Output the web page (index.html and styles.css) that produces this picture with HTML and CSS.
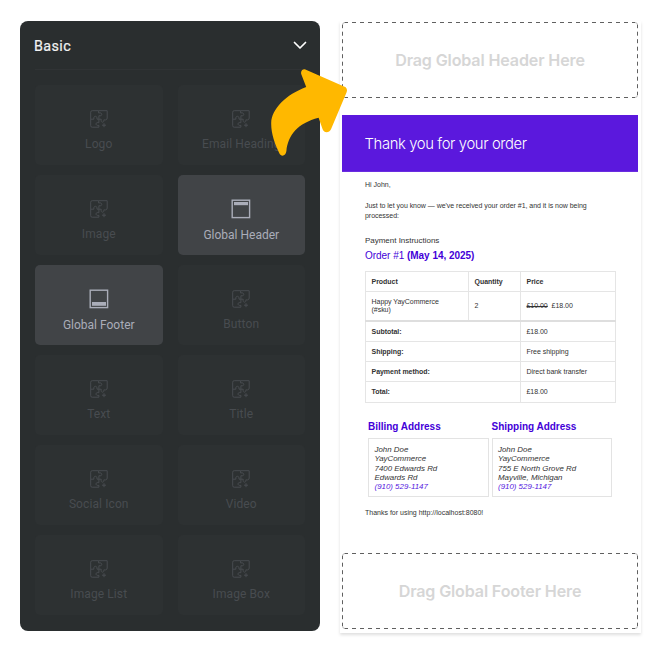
FILE: index.html
```html
<!DOCTYPE html>
<html lang="en">
<head>
<meta charset="utf-8">
<title>Email builder</title>
<link rel="stylesheet" href="styles.css">
</head>
<body>
<svg class="defs" width="0" height="0" aria-hidden="true">
  <symbol id="puzzle" viewBox="0 0 18 18">
    <path d="M8.6 .7H2.2Q.7 .7 .7 2.2V15.7Q.7 17.2 2.2 17.2H8.9V15.4C6.7 15.6 5.9 14.8 6 13.8C6.1 12.7 7.3 12.4 8.9 12.7V9.2H11.2C10.9 11.4 11.5 12.2 12.5 12.2C13.6 12.2 14 11.1 13.8 9.9H15.7Q17.2 9.6 17.2 8V.7H8.6V3C10.8 2.5 11.8 3.2 11.8 4.4C11.8 5.6 10.8 6.1 8.9 5.7V9.2H7C7.2 7.1 6.6 6.3 5.4 6.3C4.2 6.3 3.6 7.2 3.9 9.2H.7"/>
    <path d="M14 13.2V17.2M12 15.2H16"/>
  </symbol>
  <symbol id="header" viewBox="0 0 20 20">
    <rect x="1.2" y="1.2" width="17.4" height="17.4"/><path class="solid" d="M3 3H17V6.2H3Z"/>
  </symbol>
  <symbol id="footer" viewBox="0 0 20 20">
    <rect x="1.2" y="1.2" width="17.4" height="17.4"/><path class="solid" d="M3 13H17V16.8H3Z"/>
  </symbol>
</svg>
<main class="stage">
  <section class="panel">
    <header class="panel-head">
      <h2>Basic</h2>
      <svg class="chevron" viewBox="0 0 14 9"><path d="M1.5 1.5L7 7L12.5 1.5"/></svg>
    </header>
    <div class="tiles">
      <div class="tile"><svg class="icon"><use href="#puzzle"/></svg><span>Logo</span></div>
      <div class="tile"><svg class="icon"><use href="#puzzle"/></svg><span>Email Heading</span></div>
      <div class="tile"><svg class="icon"><use href="#puzzle"/></svg><span>Image</span></div>
      <div class="tile active"><svg class="icon"><use href="#header"/></svg><span>Global Header</span></div>
      <div class="tile active"><svg class="icon"><use href="#footer"/></svg><span>Global Footer</span></div>
      <div class="tile"><svg class="icon"><use href="#puzzle"/></svg><span>Button</span></div>
      <div class="tile"><svg class="icon"><use href="#puzzle"/></svg><span>Text</span></div>
      <div class="tile"><svg class="icon"><use href="#puzzle"/></svg><span>Title</span></div>
      <div class="tile"><svg class="icon"><use href="#puzzle"/></svg><span>Social Icon</span></div>
      <div class="tile"><svg class="icon"><use href="#puzzle"/></svg><span>Video</span></div>
      <div class="tile"><svg class="icon"><use href="#puzzle"/></svg><span>Image List</span></div>
      <div class="tile"><svg class="icon"><use href="#puzzle"/></svg><span>Image Box</span></div>
    </div>
  </section>

  <section class="email">
    <div class="drop">
      <svg class="dash" viewBox="0 0 296 76"><path d="M2 .5H293M2 75.5H293"/><path class="side" d="M.5 2.2V73M295.5 2.2V73"/><path class="corner" d="M.5 3Q.5 .5 3 .5M293 .5Q295.5 .5 295.5 3M.5 73Q.5 75.5 3 75.5M293 75.5Q295.5 75.5 295.5 73"/></svg>
      <span>Drag Global Header Here</span>
    </div>
    <h1 class="banner"><span>Thank you for your order</span></h1>
    <div class="body">
      <p class="hello">Hi John,</p>
      <p class="intro">Just to let you know — we've received your order #1, and it is now being processed:</p>
      <p class="instructions">Payment Instructions</p>
      <h3 class="order">Order #1 <b>(May 14, 2025)</b></h3>
      <table class="items">
        <colgroup><col class="c1"><col class="c2"><col class="c3"></colgroup>
        <tr><th>Product</th><th>Quantity</th><th>Price</th></tr>
        <tr class="product"><td>Happy YayCommerce<br>(#sku)</td><td>2</td><td><s>£10.00</s>&nbsp; £18.00</td></tr>
        <tr class="subtotal"><th colspan="2">Subtotal:</th><td>£18.00</td></tr>
        <tr><th colspan="2">Shipping:</th><td>Free shipping</td></tr>
        <tr><th colspan="2">Payment method:</th><td>Direct bank transfer</td></tr>
        <tr><th colspan="2">Total:</th><td>£18.00</td></tr>
      </table>
      <div class="addresses">
        <div>
          <h3>Billing Address</h3>
          <address>John Doe<br>YayCommerce<br>7400 Edwards Rd<br>Edwards Rd<br><span>(910) 529-1147</span></address>
        </div>
        <div>
          <h3>Shipping Address</h3>
          <address>John Doe<br>YayCommerce<br>755 E North Grove Rd<br>Mayville, Michigan<br><span>(910) 529-1147</span></address>
        </div>
      </div>
      <p class="thanks">Thanks for using http://localhost:8080!</p>
    </div>
    <div class="drop foot">
      <svg class="dash" viewBox="0 0 296 76"><path d="M2 .5H293M2 75.5H293"/><path class="side" d="M.5 2.2V73M295.5 2.2V73"/><path class="corner" d="M.5 3Q.5 .5 3 .5M293 .5Q295.5 .5 295.5 3M.5 73Q.5 75.5 3 75.5M293 75.5Q295.5 75.5 295.5 73"/></svg>
      <span>Drag Global Footer Here</span>
    </div>
  </section>
  <svg class="arrow" viewBox="0 0 80 90"><path d="M36.5 .9C33 -.9 30.2 2 31.3 5.3L36.2 18C16 25.5 1.5 40 1.2 54C1 65 5 75 9.2 84C11.2 88.4 15.8 87 16.4 82C18 66 28 54 48.6 48.8L52.6 60.3C54 64.3 59.2 64.3 61 60.3L76.5 23.5C77.5 21 77 18.7 74.6 17.7Z"/></svg>
</main>
</body>
</html>
```

FILE: styles.css
```css
* { box-sizing: border-box; }
body { margin: 0; background: #fff; font-family: "Liberation Sans", sans-serif; color: #333; }
h1, h2, h3, p { margin: 0; }
.defs { display: block; }
.stage { position: relative; width: 660px; height: 651px; padding: 20.5px 20px 0 20px; display: flex; gap: 20px; align-items: flex-start; }
.panel { width: 300px; height: 610px; background: #2a2e2f; border-radius: 8px; padding: 0 15px; }
.panel-head { height: 49px; display: flex; align-items: center; justify-content: space-between; border-bottom: 1px solid #303335; }
.panel-head h2 { font: 400 14.3px Roboto, sans-serif; letter-spacing: .4px; color: #f2f3f3; margin: 2px 0 0 -1px; -webkit-text-stroke: .2px #f2f3f3; }
.chevron { width: 14px; height: 9px; fill: none; stroke: #fff; stroke-width: 1.7; stroke-linecap: round; stroke-linejoin: round; margin: 2px -2px 0 0; }
.tiles { margin-top: 15.5px; display: grid; grid-template-columns: 127.5px 127.5px; grid-auto-rows: 80px; gap: 10px 15px; }
.tile { border-radius: 5px; background: #2d3132; display: flex; flex-direction: column; align-items: center; padding-top: 25px; color: #484c50; font: 400 12px/16px Roboto, sans-serif; letter-spacing: .1px; }
.tile span { margin-top: 8px; white-space: nowrap; }
.icon { width: 18px; height: 18px; fill: none; stroke: currentColor; stroke-width: 1; stroke-linejoin: round; }
.tile.active { background: #414447; color: #aaadb9; letter-spacing: 0; }
.active .icon { width: 20px; height: 20px; margin: -1px; stroke-width: 1.4; stroke-linejoin: miter; }
.active .icon + span { margin-top: 9px; }
.solid { fill: #aaadb9; stroke: none; }
.email { width: 301px; height: 612px; padding: 1.5px 2px 0; box-shadow: 0 2px 3px rgba(0,0,0,.13); }
.drop { position: relative; width: 296px; height: 76px; display: flex; align-items: center; justify-content: center; font: 600 16.1px Inter, sans-serif; letter-spacing: -.15px; color: #d6d6d6; white-space: nowrap; }
.dash { position: absolute; inset: 0; width: 296px; height: 76px; fill: none; stroke: #606060; stroke-width: 1; stroke-dasharray: 4 4; }
.dash .side { stroke-dasharray: 4 3.5; }
.dash .corner { stroke-dasharray: none; stroke: #bbb; }
.banner { margin-top: 17px; width: 296px; height: 57px; background: #5b18dd; color: #fff; padding: 1px 0 0 22.5px; display: flex; align-items: center; font: 300 14.8px Inter, sans-serif; letter-spacing: -.37px; white-space: nowrap; border-bottom: 1px solid #6a2de0; }
.body { height: 381px; padding: 7px 25px 0 23px; font-size: 7px; line-height: 10.4px; }
.hello { margin-top: .5px; }
.intro { margin-top: 11px; width: 232px; letter-spacing: -.03px; }
.instructions { margin-top: 13px; font-size: 8px; line-height: 12px; letter-spacing: -.02px; }
.order { margin-top: 2px; font-size: 10px; font-weight: 400; line-height: 14px; letter-spacing: -.03px; color: #4300d8; }
.items { margin-top: 8px; margin-left: -.5px; width: 250px; table-layout: fixed; border-collapse: collapse; line-height: 8px; }
.c1 { width: 103px; } .c2 { width: 52px; } .c3 { width: 95px; }
.items th, .items td { height: 20.4px; border: 1px solid #e5e5e5; padding: 1px 6px 0; text-align: left; vertical-align: middle; letter-spacing: -.03px; }
.items .product td { height: 29px; padding-top: 0; }
.items .subtotal th, .items .subtotal td { border-top: 2px solid #dedede; }
.addresses { display: flex; gap: 3px; margin: 17px 0 0 3px; }
.addresses > div { width: 120.5px; }
.addresses h3 { color: #4300d8; font-size: 10px; line-height: 14px; letter-spacing: -.02px; }
.addresses address { margin-top: 4.5px; height: 59px; border: 1px solid #e3e3e3; padding: 6px 5.5px; font-size: 7.9px; line-height: 9.2px; }
.addresses span { color: #5518e0; }
.thanks { margin-top: 10.5px; }
.arrow { position: absolute; left: 269.5px; top: 69px; width: 80px; height: 90px; fill: #ffb800; }
```
